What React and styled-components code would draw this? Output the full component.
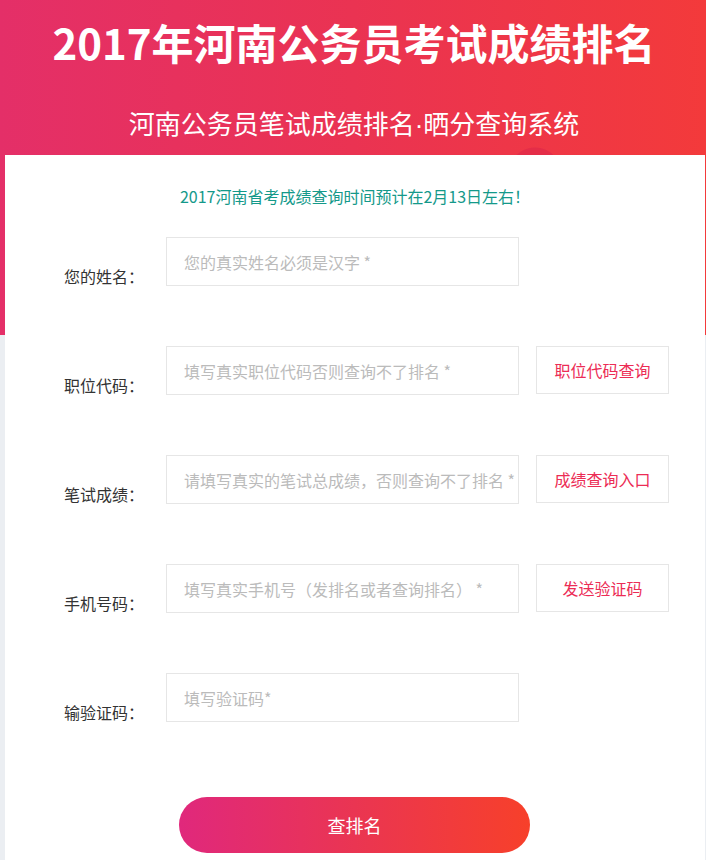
import React from 'react';
import styled, { createGlobalStyle } from 'styled-components';

const GlobalStyle = createGlobalStyle`
  html, body {
    margin: 0;
    padding: 0;
  }
  body {
    font-family: "Liberation Sans", "Noto Sans CJK SC", sans-serif;
    background: #ebeef2;
  }
  * {
    box-sizing: border-box;
  }
`;

const fields = [
  { label: '您的姓名：', placeholder: '您的真实姓名必须是汉字 *' },
  { label: '职位代码：', placeholder: '填写真实职位代码否则查询不了排名 *', action: '职位代码查询' },
  { label: '笔试成绩：', placeholder: '请填写真实的笔试总成绩，否则查询不了排名 *', action: '成绩查询入口' },
  { label: '手机号码：', placeholder: '填写真实手机号（发排名或者查询排名） *', action: '发送验证码' },
  { label: '输验证码：', placeholder: '填写验证码*' },
];

const App = () => {
  return (
    <Page>
      <GlobalStyle />
      <Header>
        <Title>2017年河南公务员考试成绩排名</Title>
        <SubTitle>河南公务员笔试成绩排名·晒分查询系统</SubTitle>
      </Header>
      <Card>
        <Notice>2017河南省考成绩查询时间预计在2月13日左右！</Notice>
        <Form>
          {fields.map((f) => (
            <Row key={f.label}>
              <Label>{f.label}</Label>
              <Input placeholder={f.placeholder} />
              {f.action && <SideButton type="button">{f.action}</SideButton>}
            </Row>
          ))}
        </Form>
        <SubmitWrap>
          <Submit type="button">查排名</Submit>
        </SubmitWrap>
      </Card>
    </Page>
  );
};

export default App;

const Page = styled.div`
  min-height: 860px;
  background:
    radial-gradient(circle at 535px 174px, #e42d48 0 26px, transparent 27px),
    linear-gradient(90deg, #e42f68 0%, #ea3352 50%, #f33a3b 100%) top left / 100% 335px no-repeat,
    #ebeef2;
  display: flex;
  flex-direction: column;
`;

const Header = styled.div`
  height: 155px;
  display: flex;
  flex-direction: column;
  align-items: center;
  padding-left: 2px;
`;

const Title = styled.h1`
  margin: 12px 0 0;
  font-family: "Noto Sans CJK SC", sans-serif;
  font-size: 42px;
  font-weight: 700;
  line-height: 60px;
  color: #fff;
`;

const SubTitle = styled.h2`
  margin: 35px 0 0;
  font-family: "Liberation Sans", "Noto Sans CJK SC", sans-serif;
  font-size: 26px;
  font-weight: 400;
  line-height: 36px;
  color: #fff;
`;

const Card = styled.div`
  flex: 1;
  margin: 0 1px 0 5px;
  background: #fff;
  padding-top: 32px;
`;

const Notice = styled.p`
  margin: 0;
  text-align: center;
  font-family: "Noto Sans CJK SC", sans-serif;
  font-size: 16px;
  line-height: 18px;
  color: #14998a;
`;

const Form = styled.div`
  margin-top: 32px;
  display: flex;
  flex-direction: column;
  gap: 60px;
`;

const Row = styled.div`
  display: flex;
  align-items: flex-start;
  height: 49px;
`;

const Label = styled.span`
  width: 139px;
  text-align: right;
  padding-top: 30px;
  font-family: "Noto Sans CJK SC", sans-serif;
  font-size: 16px;
  line-height: 18px;
  color: #333;
  white-space: nowrap;
`;

const Input = styled.input`
  margin-left: 22px;
  width: 353px;
  height: 49px;
  border: 1px solid #e6e6e6;
  padding: 0 0 0 17px;
  font-family: "Noto Sans CJK SC", sans-serif;
  font-size: 16px;
  color: #333;
  outline: none;
  &::placeholder {
    color: #bbb;
  }
`;

const SideButton = styled.button`
  margin-left: 17px;
  width: 133px;
  height: 48px;
  border: 1px solid #e6e6e6;
  background: #fff;
  font-family: "Noto Sans CJK SC", sans-serif;
  font-size: 16px;
  color: #ec2c55;
  padding: 0;
  cursor: pointer;
`;

const SubmitWrap = styled.div`
  margin-top: 75px;
  padding-left: 174px;
`;

const Submit = styled.button`
  width: 351px;
  height: 56px;
  border: none;
  border-radius: 28px;
  background: linear-gradient(90deg, #e0287c 0%, #ea3552 50%, #f7402a 100%);
  color: #fff;
  font-family: "Noto Sans CJK SC", sans-serif;
  font-size: 18px;
  cursor: pointer;
`;
